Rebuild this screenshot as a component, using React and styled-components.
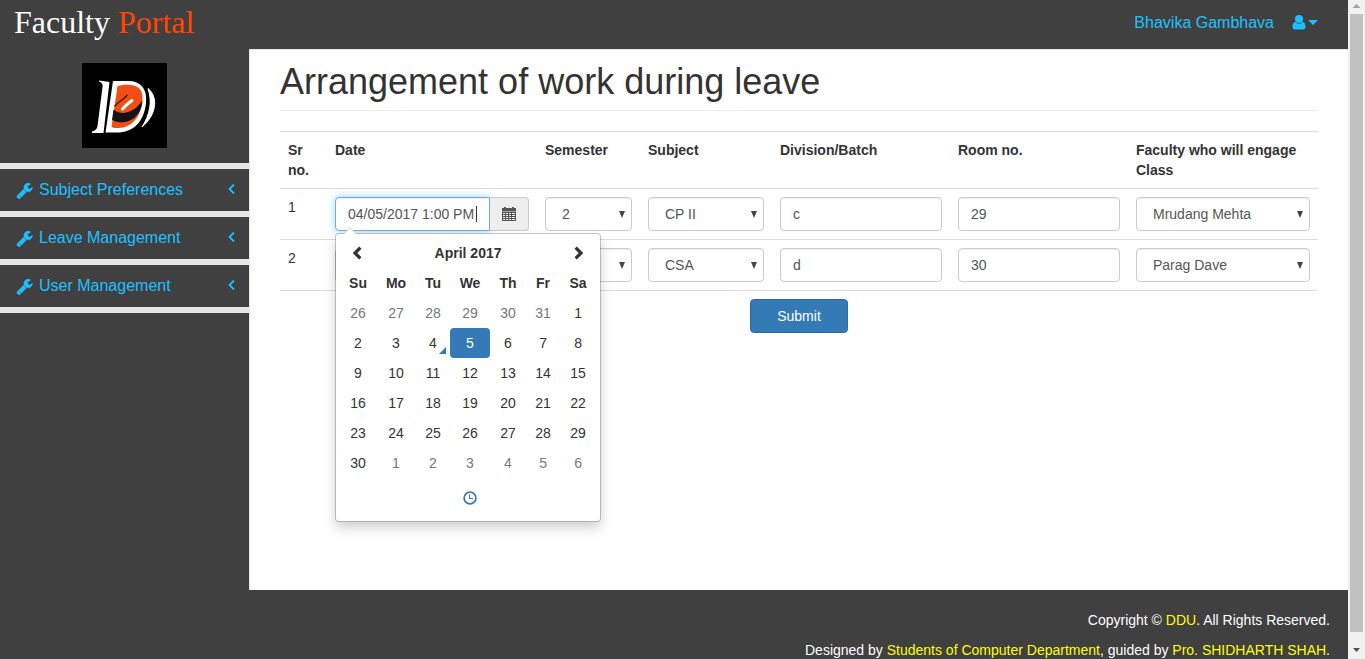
import React from 'react';
import styled, { createGlobalStyle, css } from 'styled-components';

const GlobalStyle = createGlobalStyle`
  *, *::before, *::after { box-sizing: border-box; }
  body {
    margin: 0;
    background: #404040;
    color: #333;
    font: 14px/20px "Liberation Sans", Arial, sans-serif;
  }
  button, input, select { font: inherit; color: inherit; }
`;

const Window = styled.div`
  display: flex;
  height: 100vh;
  overflow: hidden;
`;

const Page = styled.div`
  flex: 1;
  min-width: 0;
  height: 100%;
  overflow: hidden;
`;

const ScrollBar = styled.div`
  display: flex;
  flex-direction: column;
  align-items: center;
  width: 17px;
  height: 100%;
  background: #f1f1f1;
`;

const ScrollArrow = styled.svg`
  flex: none;
  display: block;
  width: 17px;
  height: 17px;
  fill: ${(p) => (p.$muted ? '#a3a3a3' : '#505050')};
`;

const ScrollThumb = styled.div`
  width: 13px;
  flex: 1;
  margin: -3px 0 10px;
  background: #c1c1c1;
`;

const TopBar = styled.header`
  display: flex;
  justify-content: space-between;
  align-items: center;
  height: 49px;
  padding: 0 30px 4px 14px;
`;

const Brand = styled.a`
  padding-bottom: 2px;
  font-family: "Liberation Serif", "Times New Roman", serif;
  font-size: 32px;
  line-height: 36px;
  color: #fff;
  text-decoration: none;
`;

const BrandAccent = styled.span`
  color: #ff4500;
`;

const UserMenu = styled.nav`
  display: flex;
  align-items: center;
  gap: 17px;
  color: #1dc0ff;
  font-size: 16px;
`;

const UserName = styled.a`
  color: inherit;
  text-decoration: none;
`;

const UserButton = styled.button`
  display: flex;
  align-items: center;
  padding: 0;
  border: 0;
  background: none;
  color: inherit;
`;

const Icon = styled.svg`
  display: block;
  flex: none;
  width: ${(p) => p.$size}px;
  height: ${(p) => p.$size}px;
  fill: currentColor;
`;

const Columns = styled.div`
  display: flex;
`;

const SideBar = styled.aside`
  flex: none;
  width: 249px;
`;

const LogoBox = styled.div`
  display: flex;
  justify-content: center;
  padding: 14px 0 15px;
`;

const Logo = styled.svg`
  display: block;
  width: 85px;
  height: 85px;
`;

const Menu = styled.ul`
  margin: 0;
  padding: 0;
  list-style: none;
  border-bottom: 6px solid #e7e7e7;
`;

const MenuItem = styled.li`
  border-top: 6px solid #e7e7e7;
`;

const MenuLink = styled.a`
  display: flex;
  align-items: center;
  height: 42px;
  padding: 0 8px 0 16px;
  color: #1dc0ff;
  font-size: 16px;
  text-decoration: none;
`;

const MenuText = styled.span`
  flex: 1;
  padding-left: 6px;
`;

const Sheet = styled.main`
  flex: 1;
  min-width: 0;
  min-height: 541px;
  padding: 12px 30px 0;
  background: #fff;
  border-left: 1px solid #e7e7e7;
  border-top: 1px solid #e7e7e7;
`;

const Heading = styled.h1`
  margin: 0 0 20px;
  padding-bottom: 8px;
  border-bottom: 1px solid #eee;
  font-size: 36px;
  font-weight: 400;
  line-height: 40px;
`;

const WorkTable = styled.table`
  width: 100%;
  table-layout: fixed;
  border-collapse: separate;
  border-spacing: 0;
`;

const Col = styled.col`
  width: ${(p) => (p.$w ? `${p.$w}px` : 'auto')};
`;

const cell = css`
  padding: 8px;
  border-top: 1px solid #ddd;
  vertical-align: top;
`;

const HeadCell = styled.th`
  ${cell}
  text-align: left;
`;

const Cell = styled.td`
  ${cell}
  text-align: ${(p) => (p.$center ? 'center' : 'left')};
`;

const field = css`
  display: block;
  width: 100%;
  height: 34px;
  padding: 6px 12px;
  background: #fff;
  border: 1px solid #ccc;
  border-radius: 4px;
  color: #555;
  outline: 0;
  box-shadow: inset 0 1px 1px rgba(0, 0, 0, 0.075);
`;

const TextField = styled.input`
  ${field}
`;

const DateGroup = styled.div`
  position: relative;
  display: flex;
  width: 194px;
`;

const DateField = styled.input`
  ${field}
  flex: 1;
  min-width: 0;
  border-radius: 4px 0 0 4px;
  ${(p) =>
    p.$active &&
    css`
      border-color: #66afe9;
      box-shadow: inset 0 1px 1px rgba(0, 0, 0, 0.075), 0 0 8px rgba(102, 175, 233, 0.6);
    `}
`;

const TextCaret = styled.span`
  position: absolute;
  top: 9px;
  left: 141px;
  width: 1px;
  height: 16px;
  background: #333;
`;

const DateButton = styled.button`
  display: flex;
  align-items: center;
  justify-content: center;
  width: 39px;
  height: 34px;
  padding: 0;
  background: #eee;
  border: 1px solid #ccc;
  border-left: 0;
  border-radius: 0 4px 4px 0;
  color: #555;
`;

const SelectBox = styled.div`
  position: relative;
`;

const SelectField = styled.select`
  ${field}
  appearance: none;
  padding-left: 16px;
`;

const SelectArrow = styled.svg`
  position: absolute;
  top: 14px;
  right: 7px;
  width: 6px;
  height: 7px;
  fill: #444;
  pointer-events: none;
`;

const Submit = styled.button`
  height: 34px;
  padding: 0 26px;
  background: #337ab7;
  border: 1px solid #2e6da4;
  border-radius: 4px;
  color: #fff;
`;

const Picker = styled.div`
  position: absolute;
  z-index: 10;
  top: 36px;
  left: 0;
  width: 266px;
  padding: 4px;
  background: #fff;
  border: 1px solid rgba(0, 0, 0, 0.2);
  background-clip: padding-box;
  border-radius: 4px;
  box-shadow: 0 6px 12px rgba(0, 0, 0, 0.175);

  &::before, &::after {
    content: "";
    position: absolute;
    border-style: solid;
    border-color: transparent;
    border-top: 0;
  }
  &::before {
    top: -7px;
    left: 7px;
    border-width: 0 7px 7px;
    border-bottom-color: #ccc;
  }
  &::after {
    top: -6px;
    left: 8px;
    border-width: 0 6px 6px;
    border-bottom-color: #fff;
  }
`;

const MonthTable = styled.table`
  width: 100%;
  table-layout: fixed;
  border-collapse: collapse;
`;

const MonthCell = styled.th`
  height: 30px;
  padding: 0;
  text-align: center;
`;

const DayCell = styled.td`
  padding: 0;
`;

const Day = styled.button`
  position: relative;
  display: block;
  width: 100%;
  height: 30px;
  padding: 0;
  border: 0;
  border-radius: 4px;
  background: ${(p) => (p.$selected ? '#337ab7' : 'none')};
  color: ${(p) => (p.$selected ? '#fff' : p.$other ? '#777' : '#333')};
  ${(p) =>
    p.$today &&
    css`
      &::after {
        content: "";
        position: absolute;
        right: 4px;
        bottom: 4px;
        border-left: 7px solid transparent;
        border-bottom: 7px solid #337ab7;
      }
    `}
`;

const IconButton = styled.button`
  display: flex;
  align-items: center;
  justify-content: center;
  width: 100%;
  height: ${(p) => p.$h}px;
  padding: 0;
  border: 0;
  background: none;
  color: ${(p) => p.$color};
`;

const TimeRow = styled.div`
  padding-left: 4px;
`;

const Footer = styled.footer`
  padding: 15px 18px 15px;
  color: #fff;
  line-height: 30px;
  text-align: right;
`;

const FooterLine = styled.p`
  margin: 0;
`;

const FooterLink = styled.a`
  color: #ff0;
  text-decoration: none;
`;

const UserIcon = () => (
  <Icon $size={17} viewBox="0 0 17 17">
    <circle cx="8" cy="5" r="4" />
    <path d="M4.500 7.700C2.200 8.300 1.500 10 1.500 12.800c0 1.800 1 2.700 2.500 2.700h8c1.500 0 2.500-.900 2.500-2.700 0-2.800-.700-4.500-3-5.100C10.500 9 9.400 9.700 8 9.700S5.500 9 4.500 7.700z" />
  </Icon>
);

const WrenchIcon = () => (
  <Icon $size={17} viewBox="0 0 1792 1792">
    <path
      d="M448 1472q0-26-19-45t-45-19-45 19-19 45 19 45 45 19 45-19 19-45zm644-420l-682 682q-37 37-90 37-52 0-91-37l-106-108q-38-36-38-90 0-53 38-91l681-681q39 98 114.500 173.500t173.500 114.500zm634-435q0 39-23 106-47 134-164.500 217.500t-258.500 83.500q-185 0-316.500-131.500t-131.500-316.500 131.500-316.500 316.500-131.500q58 0 121.500 16.500t107.500 46.500q16 11 16 28t-16 28l-293 169v224l193 107q5-3 79-48.500t135.500-81 70.500-35.500q15 0 23.500 10t8.500 25z"
      stroke="currentColor"
      strokeWidth="60"
    />
  </Icon>
);

const AngleLeftIcon = () => (
  <Icon $size={18} viewBox="0 0 18 18">
    <path d="M11 3.500 6.500 8l4.500 4.500" fill="none" stroke="currentColor" strokeWidth="1.800" />
  </Icon>
);

const CalendarIcon = () => (
  <Icon $size={14} viewBox="0 0 14 14">
    <path d="M0 1h2V0h2v1h6V0h2v1h2v3.500H0z" />
    <path
      fillRule="evenodd"
      d="M0 5h14v9H0zM1 6v1h2V6zM4 6v1h2V6zM7 6v1h2V6zM10 6v1h3V6zM1 8v1h2V8zM4 8v1h2V8zM7 8v1h2V8zM10 8v1h3V8zM1 10v1h2v-1zM4 10v1h2v-1zM7 10v1h2v-1zM10 10v1h3v-1zM1 12v1h2v-1zM4 12v1h2v-1zM7 12v1h2v-1zM10 12v1h3v-1z"
    />
  </Icon>
);

const ChevronIcon = ({ right }) => (
  <Icon $size={16} viewBox="0 0 16 16">
    <path d={right ? 'M6.800 1.500 4.500 3.800 8.600 8l-4.100 4.200 2.300 2.300L13.300 8z' : 'M9.200 1.500l2.300 2.300L7.400 8l4.100 4.200-2.300 2.300L2.700 8z'} />
  </Icon>
);

const ClockIcon = () => (
  <Icon $size={14} viewBox="0 0 14 14">
    <circle cx="7" cy="7" r="5.900" fill="none" stroke="currentColor" strokeWidth="1.700" />
    <path d="M6.500 3.500v4H10" fill="none" stroke="currentColor" strokeWidth="1.100" />
  </Icon>
);

const LogoMark = () => (
  <Logo viewBox="0 0 85 85" role="img" aria-label="DDU">
    <rect width="85" height="85" />
    <path d="M17 17.500 27.500 19 21.500 70H10v-1.500c3.500-1 5-2.500 5.500-5.500L20.500 24c.500-3-.500-4-3.500-5.500z" fill="#fff" />
    <path d="M31 18h15c13 0 19.500 8 18 22-2 19-13 29.500-29 29.500H23.500z" fill="#fff" />
    <path d="M35.500 23c14-3 25.500-1 25 12.500-.500 18-11 29.500-24 29.500-3 0-5 0-7-1z" fill="#f04e14" />
    <path d="M31.500 46.500c8 7 21 3 29-9-.500 6-2 10-5 14-6 8-17 10-25.500 5.500z" fill="#151217" />
    <path d="M32.500 43.500c3-4 8-6 13-11.500" fill="none" stroke="#3a1810" strokeWidth="1.300" />
    <path d="M40.500 46c3-3.500 6-6 9.500-8.500" fill="none" stroke="#fff" strokeWidth="3" strokeLinecap="round" />
    <path d="M66 25.500c11 9 8 27-6 38.500 8-13 10.500-25 6-38.500z" fill="#fff" stroke="#fff" strokeWidth="1" />
  </Logo>
);

const MENU = ['Subject Preferences', 'Leave Management', 'User Management'];

const HEADINGS = ['Sr no.', 'Date', 'Semester', 'Subject', 'Division/Batch', 'Room no.', 'Faculty who will engage Class'];
const COLUMN_WIDTHS = [47, 210, 103, 132, 0, 0, 190];

const ROWS = [
  { date: '04/05/2017 1:00 PM', semester: '2', subject: 'CP II', division: 'c', room: '29', faculty: 'Mrudang Mehta', open: true },
  { date: '', semester: '4', subject: 'CSA', division: 'd', room: '30', faculty: 'Parag Dave' },
];

const WEEKDAYS = ['Su', 'Mo', 'Tu', 'We', 'Th', 'Fr', 'Sa'];
const DAY_WIDTHS = [36, 40, 34, 40, 36, 34, 36];
const WEEKS = [
  [26, 27, 28, 29, 30, 31, 1],
  [2, 3, 4, 5, 6, 7, 8],
  [9, 10, 11, 12, 13, 14, 15],
  [16, 17, 18, 19, 20, 21, 22],
  [23, 24, 25, 26, 27, 28, 29],
  [30, 1, 2, 3, 4, 5, 6],
];

function DatePicker() {
  return (
    <Picker>
      <MonthTable>
        <colgroup>{DAY_WIDTHS.map((w, i) => <Col key={i} $w={w} />)}</colgroup>
        <thead>
          <tr>
            <MonthCell><IconButton type="button" $h={30} $color="#333" aria-label="Previous month"><ChevronIcon /></IconButton></MonthCell>
            <MonthCell colSpan={5}>April 2017</MonthCell>
            <MonthCell><IconButton type="button" $h={30} $color="#333" aria-label="Next month"><ChevronIcon right /></IconButton></MonthCell>
          </tr>
          <tr>{WEEKDAYS.map((d) => <MonthCell key={d}>{d}</MonthCell>)}</tr>
        </thead>
        <tbody>
          {WEEKS.map((week, w) => (
            <tr key={w}>
              {week.map((d) => {
                const other = (w === 0 && d > 7) || (w === 5 && d < 7);
                return (
                  <DayCell key={d}>
                    <Day type="button" $other={other} $today={w === 1 && d === 4} $selected={w === 1 && d === 5}>{d}</Day>
                  </DayCell>
                );
              })}
            </tr>
          ))}
        </tbody>
      </MonthTable>
      <TimeRow>
        <IconButton type="button" $h={39} $color="#337ab7" aria-label="Select time"><ClockIcon /></IconButton>
      </TimeRow>
    </Picker>
  );
}

function Select({ label, value }) {
  return (
    <SelectBox>
      <SelectField aria-label={label} defaultValue={value}>
        <option>{value}</option>
      </SelectField>
      <SelectArrow viewBox="0 0 6 7"><path d="M0 0h6L3 7z" /></SelectArrow>
    </SelectBox>
  );
}

export default function App() {
  return (
    <Window>
      <GlobalStyle />
      <Page>
        <TopBar>
          <Brand href="#">Faculty <BrandAccent>Portal</BrandAccent></Brand>
          <UserMenu>
            <UserName href="#">Bhavika Gambhava</UserName>
            <UserButton type="button" aria-label="Account">
              <UserIcon />
              <Icon $size={10} viewBox="0 0 10 10"><path d="M0 2h10L5 7z" /></Icon>
            </UserButton>
          </UserMenu>
        </TopBar>
        <Columns>
          <SideBar>
            <LogoBox><LogoMark /></LogoBox>
            <Menu>
              {MENU.map((text) => (
                <MenuItem key={text}>
                  <MenuLink href="#">
                    <WrenchIcon />
                    <MenuText>{text}</MenuText>
                    <AngleLeftIcon />
                  </MenuLink>
                </MenuItem>
              ))}
            </Menu>
          </SideBar>
          <Sheet>
            <Heading>Arrangement of work during leave</Heading>
            <WorkTable>
              <colgroup>{COLUMN_WIDTHS.map((w, i) => <Col key={i} $w={w} />)}</colgroup>
              <thead>
                <tr>{HEADINGS.map((h) => <HeadCell key={h}>{h}</HeadCell>)}</tr>
              </thead>
              <tbody>
                {ROWS.map((row, i) => (
                  <tr key={i}>
                    <Cell>{i + 1}</Cell>
                    <Cell>
                      <DateGroup>
                        <DateField aria-label="Date" defaultValue={row.date} $active={row.open} />
                        {row.open && <TextCaret />}
                        <DateButton type="button" aria-label="Pick a date"><CalendarIcon /></DateButton>
                        {row.open && <DatePicker />}
                      </DateGroup>
                    </Cell>
                    <Cell><Select label="Semester" value={row.semester} /></Cell>
                    <Cell><Select label="Subject" value={row.subject} /></Cell>
                    <Cell><TextField aria-label="Division/Batch" defaultValue={row.division} /></Cell>
                    <Cell><TextField aria-label="Room no." defaultValue={row.room} /></Cell>
                    <Cell><Select label="Faculty" value={row.faculty} /></Cell>
                  </tr>
                ))}
                <tr>
                  <Cell colSpan={7} $center><Submit type="submit">Submit</Submit></Cell>
                </tr>
              </tbody>
            </WorkTable>
          </Sheet>
        </Columns>
        <Footer>
          <FooterLine>Copyright © <FooterLink href="#">DDU</FooterLink>. All Rights Reserved.</FooterLine>
          <FooterLine>
            Designed by <FooterLink href="#">Students of Computer Department</FooterLink>, guided by{' '}
            <FooterLink href="#">Pro. SHIDHARTH SHAH</FooterLink>.
          </FooterLine>
        </Footer>
      </Page>
      <ScrollBar aria-hidden="true">
        <ScrollArrow $muted viewBox="0 0 17 17"><path d="M8.500 4l4 4h-8z" /></ScrollArrow>
        <ScrollThumb />
        <ScrollArrow viewBox="0 0 17 17"><path d="M5 6h7l-3.500 4z" /></ScrollArrow>
      </ScrollBar>
    </Window>
  );
}
